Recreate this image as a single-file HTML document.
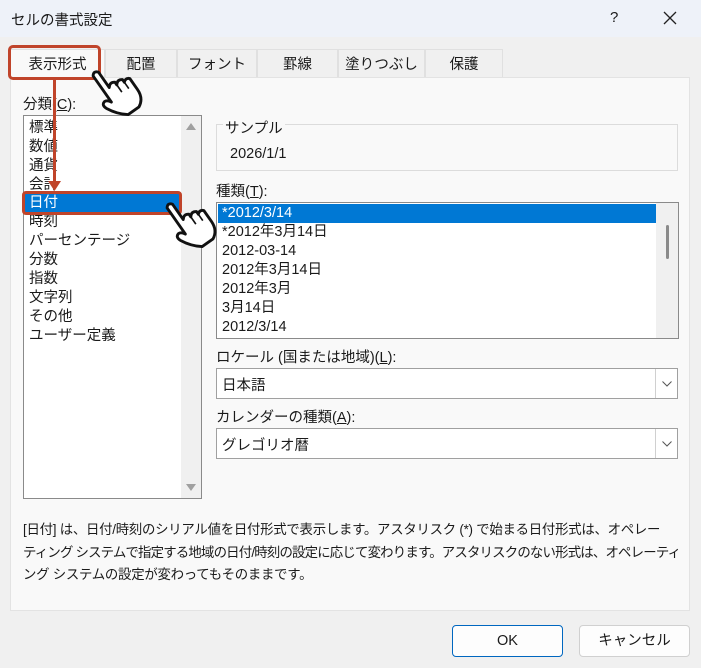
<!DOCTYPE html>
<html><head><meta charset="utf-8"><style>
*{box-sizing:border-box;margin:0;padding:0}
body{width:701px;height:668px;background:#f0f0f0;font-family:"Liberation Sans","Noto Sans CJK JP",sans-serif;font-size:14.5px;color:#1a1a1a;position:relative;overflow:hidden}
.a{position:absolute;white-space:nowrap}
.title{left:0;top:0;width:701px;height:37px;background:#eef2f9}
.tab{position:absolute;top:49px;height:28px;background:#f0f0f0;border:1px solid #e0e0e0;border-bottom:none;text-align:center;line-height:30px}
.panel{left:10px;top:77px;width:680px;height:534px;background:#f9f9f9;border:1px solid #e3e3e3}
.box{background:#fff;border:1px solid #8a8a8a}
.li{position:absolute;left:5px;height:19px;line-height:19px}
.dd{position:absolute;left:216px;width:462px;height:31px;background:#fff;border:1px solid #a0a0a0}
.dd span{position:absolute;left:5px;top:5px}
.dd i{position:absolute;right:0;top:0;width:22px;height:29px;border-left:1px solid #d0d0d0}
.btn{position:absolute;top:625px;width:111px;height:32px;border-radius:4px;background:#fdfdfd;text-align:center;line-height:30px}
u{text-decoration:underline}
</style></head><body>
<div class="a title"></div>
<div class="a" style="left:11px;top:9px">セルの書式設定</div>
<div class="a" style="left:610px;top:9px;font-size:15px">?</div>
<svg class="a" style="left:663px;top:11px" width="14" height="14"><path d="M1 1L13 13M13 1L1 13" stroke="#222" stroke-width="1.3"/></svg>

<div class="a panel"></div>
<div class="tab" style="left:10px;width:95px;background:#f9f9f9;height:29px">表示形式</div>
<div class="tab" style="left:105px;width:72px">配置</div>
<div class="tab" style="left:177px;width:80px">フォント</div>
<div class="tab" style="left:257px;width:81px">罫線</div>
<div class="tab" style="left:338px;width:87px">塗りつぶし</div>
<div class="tab" style="left:425px;width:78px">保護</div>
<div class="a" style="left:8px;top:45px;width:93px;height:35px;border:3px solid #c0442a;border-radius:5px"></div>

<div class="a" style="left:23px;top:93px">分類(<u>C</u>):</div>
<div class="a box" style="left:23px;top:115px;width:179px;height:384px">
 <div class="a" style="right:0;top:0;width:20px;height:382px;background:#f0f0f0"></div>
 <svg class="a" style="right:5px;top:7px" width="10" height="7"><path d="M0 7L5 0L10 7Z" fill="#a0a0a0"/></svg>
 <svg class="a" style="right:5px;top:368px" width="10" height="7"><path d="M0 0L5 7L10 0Z" fill="#a0a0a0"/></svg>
 <div class="li" style="top:3px">標準</div>
 <div class="li" style="top:22px">数値</div>
 <div class="li" style="top:41px">通貨</div>
 <div class="li" style="top:60px">会計</div>
 <div class="a" style="left:0;top:78px;width:157px;height:20px;background:#0078d4"></div>
 <div class="li" style="top:78px;color:#fff">日付</div>
 <div class="li" style="top:97px">時刻</div>
 <div class="li" style="top:116px">パーセンテージ</div>
 <div class="li" style="top:135px">分数</div>
 <div class="li" style="top:154px">指数</div>
 <div class="li" style="top:173px">文字列</div>
 <div class="li" style="top:192px">その他</div>
 <div class="li" style="top:211px">ユーザー定義</div>
</div>
<div class="a" style="left:22px;top:191px;width:160px;height:24px;border:3px solid #c0442a;border-radius:4px"></div>
<div class="a" style="left:53px;top:78px;width:3px;height:106px;background:#c0442a"></div>
<svg class="a" style="left:48px;top:181px" width="13" height="10"><path d="M0 0L13 0L6.5 10Z" fill="#c0442a"/></svg>

<div class="a" style="left:216px;top:124px;width:462px;height:47px;border:1px solid #dcdcdc"></div>
<div class="a" style="left:223px;top:117px;background:#f9f9f9;padding:0 2px">サンプル</div>
<div class="a" style="left:230px;top:146px">2026/1/1</div>

<div class="a" style="left:216px;top:180px">種類(<u>T</u>):</div>
<div class="a box" style="left:216px;top:202px;width:463px;height:137px">
 <div class="a" style="right:0;top:0;width:22px;height:135px;background:#f0f0f0"></div>
 <div class="a" style="right:9px;top:22px;width:3px;height:34px;background:#8a8a8a;border-radius:2px"></div>
 <div class="a" style="left:1px;top:1px;width:438px;height:19px;background:#0078d4"></div>
 <div class="li" style="top:1px;color:#fff">*2012/3/14</div>
 <div class="li" style="top:20px">*2012年3月14日</div>
 <div class="li" style="top:39px">2012-03-14</div>
 <div class="li" style="top:58px">2012年3月14日</div>
 <div class="li" style="top:77px">2012年3月</div>
 <div class="li" style="top:96px">3月14日</div>
 <div class="li" style="top:115px">2012/3/14</div>
</div>

<div class="a" style="left:216px;top:346px">ロケール (国または地域)(<u>L</u>):</div>
<div class="dd" style="top:368px"><span>日本語</span><i><svg style="position:absolute;left:6px;top:12px" width="10" height="6"><path d="M0.5 0.5L5 5L9.5 0.5" stroke="#555" fill="none"/></svg></i></div>
<div class="a" style="left:216px;top:406px">カレンダーの種類(<u>A</u>):</div>
<div class="dd" style="top:428px"><span>グレゴリオ暦</span><i><svg style="position:absolute;left:6px;top:12px" width="10" height="6"><path d="M0.5 0.5L5 5L9.5 0.5" stroke="#555" fill="none"/></svg></i></div>

<div class="a" style="left:23px;top:519px;line-height:22.5px;font-size:13.4px;letter-spacing:-0.25px">[日付] は、日付/時刻のシリアル値を日付形式で表示します。アスタリスク (*) で始まる日付形式は、オペレー<br><span style="letter-spacing:-0.8px">ティング システムで指定する地域の日付/時刻の設定に応じて変わります。アスタリスクのない形式は、オペレーティ</span><br>ング システムの設定が変わってもそのままです。</div>

<div class="btn" style="left:452px;border:1px solid #0067c0">OK</div>
<div class="btn" style="left:579px;border:1px solid #d0d0d0">キャンセル</div>

<svg class="a" style="left:82px;top:58px" width="64" height="62"><g transform="translate(12,4) scale(1.1) rotate(-35 20 25)"><path d="M10,3 Q13,-1 16,3 L16,20 Q19,16 23,19 L23,22 Q26,18 30,21 L30,24 Q33,21 36,24 L36,36 Q36,46 28,50 L16,50 Q8,44 3,34 Q1,29 5,28 Q8,28 10,32 Z" fill="#fff" stroke="#111" stroke-width="2.6" stroke-linejoin="round"/><path d="M23,22 L23,30 M30,24 L30,31" stroke="#111" stroke-width="1.5"/></g></svg>
<svg class="a" style="left:156px;top:190px" width="64" height="62"><g transform="translate(12,4) scale(1.1) rotate(-35 20 25)"><path d="M10,3 Q13,-1 16,3 L16,20 Q19,16 23,19 L23,22 Q26,18 30,21 L30,24 Q33,21 36,24 L36,36 Q36,46 28,50 L16,50 Q8,44 3,34 Q1,29 5,28 Q8,28 10,32 Z" fill="#fff" stroke="#111" stroke-width="2.6" stroke-linejoin="round"/><path d="M23,22 L23,30 M30,24 L30,31" stroke="#111" stroke-width="1.5"/></g></svg>
</body></html>
